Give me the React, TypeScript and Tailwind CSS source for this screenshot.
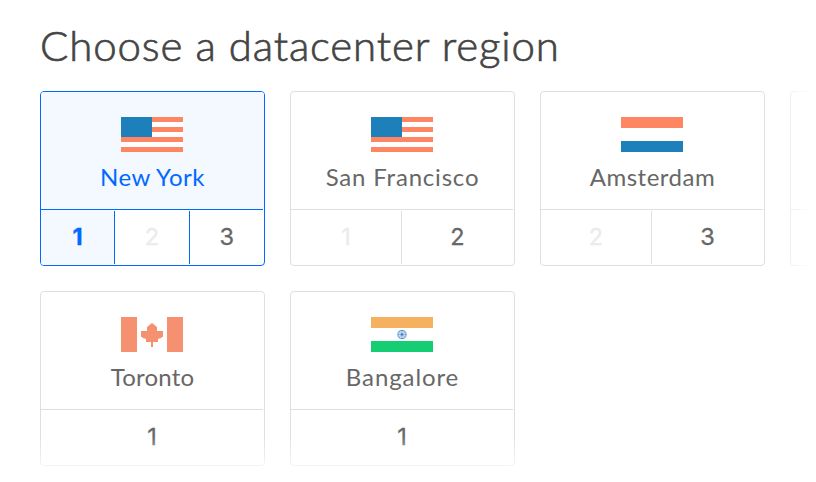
import type { ReactNode } from 'react';

type Slot = { n: string; state?: 'active' | 'disabled' };
type Region = { name: string; tracking: string; flag: ReactNode; slots: Slot[]; active?: boolean };

const UsFlag = () => (
  <svg width="62" height="35" shapeRendering="crispEdges">
    <rect width="62" height="35" fill="#fff" />
    <path fill="#ff8663" d="M0 0h62v5H0zM0 10h62v5H0zM0 20h62v5H0zM0 30h62v5H0z" />
    <rect width="31" height="20" fill="#1d80bb" />
  </svg>
);

const NlFlag = () => (
  <svg width="62" height="35" shapeRendering="crispEdges">
    <rect width="62" height="11" fill="#ff8663" />
    <rect y="24" width="62" height="11" fill="#1d80bb" />
  </svg>
);

const CaFlag = () => (
  <svg width="62" height="35" fill="#f59170">
    <rect width="16" height="35" />
    <rect x="46" width="16" height="35" />
    <path d="M31 6l2 1.500 3 2.500v4h6v5.500l-2 1.500-3 1v3h-5v5h-2v-5h-5v-3l-3-1-2-1.500v-5.500h6v-4l3-2.500z" />
  </svg>
);

const InFlag = () => (
  <svg width="62" height="35">
    <rect width="62" height="11" fill="#f5b060" />
    <rect y="24" width="62" height="11" fill="#15cd72" />
    <g stroke="#4a86c5" fill="none">
      <circle cx="31" cy="17.500" r="4.100" strokeWidth=".9" fill="#d5e4f5" />
      <path strokeWidth=".5" d="M31 13.500v8M27 17.500h8M28.200 14.700l5.600 5.600M33.800 14.700l-5.600 5.600" />
      <circle cx="31" cy="17.500" r=".8" fill="#2f70b8" />
    </g>
  </svg>
);

const regions: Region[] = [
  { name: 'New York', tracking: 'tracking-[0.5px]', flag: <UsFlag />, active: true, slots: [{ n: '1', state: 'active' }, { n: '2', state: 'disabled' }, { n: '3' }] },
  { name: 'San Francisco', tracking: 'tracking-[0.8px]', flag: <UsFlag />, slots: [{ n: '1', state: 'disabled' }, { n: '2' }] },
  { name: 'Amsterdam', tracking: 'tracking-[0.5px]', flag: <NlFlag />, slots: [{ n: '2', state: 'disabled' }, { n: '3' }] },
  { name: '', tracking: '', flag: null, slots: [] },
  { name: 'Toronto', tracking: 'tracking-[0.2px]', flag: <CaFlag />, slots: [{ n: '1' }] },
  { name: 'Bangalore', tracking: 'tracking-[0.9px]', flag: <InFlag />, slots: [{ n: '1' }] },
];

function Card({ region }: { region: Region }) {
  const { active } = region;
  const line = active ? 'border-[#0069ff]' : 'border-[#dfdfdf]';
  return (
    <div className={`flex h-[175px] w-[225px] flex-col overflow-hidden rounded-[4px] border ${line}`}>
      <div className={`flex h-[117px] shrink-0 flex-col items-center pt-[25px] pr-px ${active ? 'bg-[#f4f8ff] text-[#0069ff]' : 'text-[#676767]'}`}>
        <div className="h-[35px]">{region.flag}</div>
        <div className={`mt-[10px] pl-px text-[24px] leading-[30px] whitespace-nowrap ${region.tracking}`}>{region.name}</div>
      </div>
      <div className={`mr-px h-px shrink-0 ${active ? 'bg-[#0069ff]' : 'bg-[#dfdfdf]'}`} />
      <div className={`flex flex-1 ${active ? '' : 'pr-px'}`}>
        {region.slots.map((s, i) => (
          <div
            key={s.n}
            className={`flex flex-1 items-stretch ${s.state === 'active' ? 'bg-[#f4f8ff] font-bold text-[#0069ff]' : s.state === 'disabled' ? 'text-[#ebebeb]' : 'text-[#676767]'}`}
          >
            <div className="flex-1 pt-[11px] text-center font-['Inter',sans-serif] text-[23.500px] leading-[32px] [-webkit-text-stroke:0.3px_currentColor]">{s.n}</div>
            {i < region.slots.length - 1 && <div className={`my-px w-px ${active ? 'bg-[#0069ff]' : 'bg-[#dfdfdf]'}`} />}
          </div>
        ))}
      </div>
    </div>
  );
}

export default function App() {
  return (
    <div className="relative h-[482px] w-[816px] overflow-hidden bg-white pt-[20px] pl-[40px] font-['Lato',sans-serif]">
      <h1 className="h-[71px] text-[42px] leading-[50px] font-light tracking-[0.84px] whitespace-nowrap text-[#444] [-webkit-text-stroke:0.7px_#444]">
        Choose a datacenter region
      </h1>
      <div className="grid w-[975px] grid-cols-[repeat(4,225px)] gap-[25px]">
        {regions.map((r, i) => (
          <Card key={i} region={r} />
        ))}
      </div>
      <div className="absolute inset-y-0 right-0 w-[46px] bg-linear-to-r from-white/0 to-white to-[40px]" />
      <div className="absolute inset-x-0 bottom-0 h-[46px] bg-linear-to-b from-white/0 to-white to-[44px]" />
    </div>
  );
}
